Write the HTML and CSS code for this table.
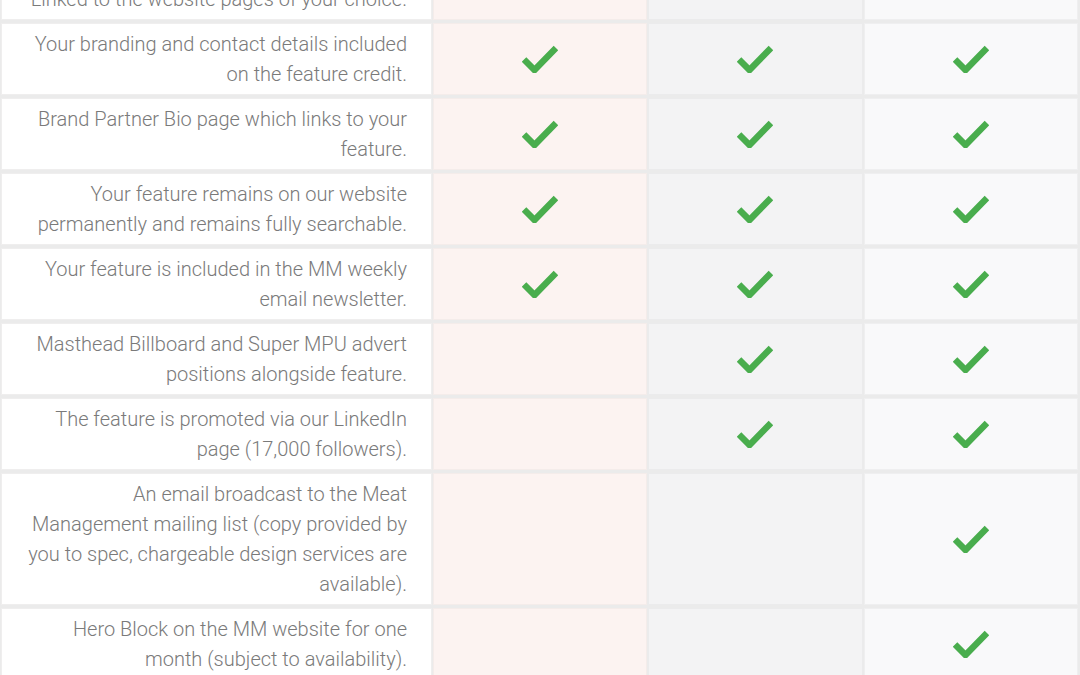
FILE: index.html
```html
<!DOCTYPE html>
<html lang="en">
<head>
<meta charset="utf-8">
<title>Feature packages</title>
<link rel="stylesheet" href="styles.css">
</head>
<body>
<div class="table">
  <div class="row">
    <div class="cell label">Your feature includes hyperlinks<br>Linked to the website pages of your choice.</div>
    <div class="cell c1"><svg class="tick" viewBox="0 0 36 28"><polyline points="2,14.5 12.5,25 34,3"/></svg></div>
    <div class="cell c2"><svg class="tick" viewBox="0 0 36 28"><polyline points="2,14.5 12.5,25 34,3"/></svg></div>
    <div class="cell c3"><svg class="tick" viewBox="0 0 36 28"><polyline points="2,14.5 12.5,25 34,3"/></svg></div>
  </div>
  <div class="row">
    <div class="cell label">Your branding and contact details included on the feature credit.</div>
    <div class="cell c1"><svg class="tick" viewBox="0 0 36 28"><polyline points="2,14.5 12.5,25 34,3"/></svg></div>
    <div class="cell c2"><svg class="tick" viewBox="0 0 36 28"><polyline points="2,14.5 12.5,25 34,3"/></svg></div>
    <div class="cell c3"><svg class="tick" viewBox="0 0 36 28"><polyline points="2,14.5 12.5,25 34,3"/></svg></div>
  </div>
  <div class="row">
    <div class="cell label">Brand Partner Bio page which links to your feature.</div>
    <div class="cell c1"><svg class="tick" viewBox="0 0 36 28"><polyline points="2,14.5 12.5,25 34,3"/></svg></div>
    <div class="cell c2"><svg class="tick" viewBox="0 0 36 28"><polyline points="2,14.5 12.5,25 34,3"/></svg></div>
    <div class="cell c3"><svg class="tick" viewBox="0 0 36 28"><polyline points="2,14.5 12.5,25 34,3"/></svg></div>
  </div>
  <div class="row">
    <div class="cell label">Your feature remains on our website permanently and remains fully searchable.</div>
    <div class="cell c1"><svg class="tick" viewBox="0 0 36 28"><polyline points="2,14.5 12.5,25 34,3"/></svg></div>
    <div class="cell c2"><svg class="tick" viewBox="0 0 36 28"><polyline points="2,14.5 12.5,25 34,3"/></svg></div>
    <div class="cell c3"><svg class="tick" viewBox="0 0 36 28"><polyline points="2,14.5 12.5,25 34,3"/></svg></div>
  </div>
  <div class="row">
    <div class="cell label">Your feature is included in the MM weekly email newsletter.</div>
    <div class="cell c1"><svg class="tick" viewBox="0 0 36 28"><polyline points="2,14.5 12.5,25 34,3"/></svg></div>
    <div class="cell c2"><svg class="tick" viewBox="0 0 36 28"><polyline points="2,14.5 12.5,25 34,3"/></svg></div>
    <div class="cell c3"><svg class="tick" viewBox="0 0 36 28"><polyline points="2,14.5 12.5,25 34,3"/></svg></div>
  </div>
  <div class="row">
    <div class="cell label">Masthead Billboard and Super MPU advert positions alongside feature.</div>
    <div class="cell c1"></div>
    <div class="cell c2"><svg class="tick" viewBox="0 0 36 28"><polyline points="2,14.5 12.5,25 34,3"/></svg></div>
    <div class="cell c3"><svg class="tick" viewBox="0 0 36 28"><polyline points="2,14.5 12.5,25 34,3"/></svg></div>
  </div>
  <div class="row">
    <div class="cell label">The feature is promoted via our LinkedIn page (17,000 followers).</div>
    <div class="cell c1"></div>
    <div class="cell c2"><svg class="tick" viewBox="0 0 36 28"><polyline points="2,14.5 12.5,25 34,3"/></svg></div>
    <div class="cell c3"><svg class="tick" viewBox="0 0 36 28"><polyline points="2,14.5 12.5,25 34,3"/></svg></div>
  </div>
  <div class="row">
    <div class="cell label">An email broadcast to the Meat Management mailing list (copy provided by you to spec, chargeable design services are available).</div>
    <div class="cell c1"></div>
    <div class="cell c2"></div>
    <div class="cell c3"><svg class="tick" viewBox="0 0 36 28"><polyline points="2,14.5 12.5,25 34,3"/></svg></div>
  </div>
  <div class="row">
    <div class="cell label">Hero Block on the MM website for one month (subject to availability).</div>
    <div class="cell c1"></div>
    <div class="cell c2"></div>
    <div class="cell c3"><svg class="tick" viewBox="0 0 36 28"><polyline points="2,14.5 12.5,25 34,3"/></svg></div>
  </div>
</div>
</body>
</html>
```

FILE: styles.css
```css
html, body {
  margin: 0;
  padding: 0;
  background: #ebebeb;
}
body {
  overflow: hidden;
  height: 675px;
}
.table {
  margin-top: -52px;
  padding: 0 2px 0 1px;
  display: flex;
  flex-direction: column;
  gap: 3px;
  background: #ebebeb;
  font-family: Roboto, "Liberation Sans", sans-serif;
  font-weight: 300;
}
.row {
  display: grid;
  grid-template-columns: 431px 1fr 1fr 1fr;
  column-gap: 1px;
}
.cell {
  box-sizing: border-box;
  padding: 5px 24px;
  min-height: 72px;
  display: flex;
  align-items: center;
  justify-content: center;
  border: 1px solid #efeeee;
}
.label {
  background: #ffffff;
  justify-content: flex-end;
  text-align: right;
  font-size: 20px;
  line-height: 30px;
  color: #7a7a7a;
  padding-left: 24px;
}
.c1 { background: #fcf3f1; border-color: #f4ecea; }
.c2 { background: #f3f3f4; border-color: #ebebec; }
.c3 { background: #f9f9fa; border-color: #efeff0; }
.tick {
  width: 36px;
  height: 28px;
  fill: none;
  stroke: #49ad4d;
  stroke-width: 6.5;
}
```
